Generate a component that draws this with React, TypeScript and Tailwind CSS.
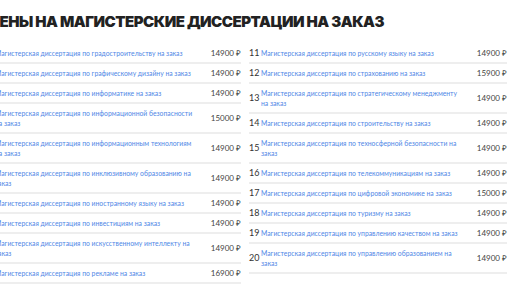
const left = [
  { n: 1, t: 'Магистерская диссертация по градостроительству на заказ', p: '14900 ₽' },
  { n: 2, t: 'Магистерская диссертация по графическому дизайну на заказ', p: '14900 ₽' },
  { n: 3, t: 'Магистерская диссертация по информатике на заказ', p: '14900 ₽' },
  { n: 4, t: 'Магистерская диссертация по информационной безопасности на заказ', p: '15000 ₽' },
  { n: 5, t: 'Магистерская диссертация по информационным технологиям на заказ', p: '14900 ₽' },
  { n: 6, t: 'Магистерская диссертация по инклюзивному образованию на заказ', p: '14900 ₽' },
  { n: 7, t: 'Магистерская диссертация по иностранному языку на заказ', p: '14900 ₽' },
  { n: 8, t: 'Магистерская диссертация по инвестициям на заказ', p: '14900 ₽' },
  { n: 9, t: 'Магистерская диссертация по искусственному интеллекту на заказ', p: '14900 ₽' },
  { n: 10, t: 'Магистерская диссертация по рекламе на заказ', p: '16900 ₽' },
];

const right = [
  { n: 11, t: 'Магистерская диссертация по русскому языку на заказ', p: '14900 ₽' },
  { n: 12, t: 'Магистерская диссертация по страхованию на заказ', p: '15900 ₽' },
  { n: 13, t: 'Магистерская диссертация по стратегическому менеджменту на заказ', p: '14900 ₽' },
  { n: 14, t: 'Магистерская диссертация по строительству на заказ', p: '14900 ₽' },
  { n: 15, t: 'Магистерская диссертация по техносферной безопасности на заказ', p: '14900 ₽' },
  { n: 16, t: 'Магистерская диссертация по телекоммуникациям на заказ', p: '14900 ₽' },
  { n: 17, t: 'Магистерская диссертация по цифровой экономике на заказ', p: '15000 ₽' },
  { n: 18, t: 'Магистерская диссертация по туризму на заказ', p: '14900 ₽' },
  { n: 19, t: 'Магистерская диссертация по управлению качеством на заказ', p: '14900 ₽' },
  { n: 20, t: 'Магистерская диссертация по управлению образованием на заказ', p: '14900 ₽' },
];

type Item = { n: number; t: string; p: string };

const PriceList = ({ items }: { items: Item[] }) => (
  <div className="w-[258px] shrink-0">
    {items.map((item) => (
      <div key={item.n} className="flex items-center py-[4px] border-b-2 border-[#eeeeee]">
        <span className="w-[12px] shrink-0 text-[9px] leading-[10px] text-[#333333]">{item.n}</span>
        <a href="#" className="w-[200px] shrink-0 text-[6.8px] leading-[10px] text-[#5087e6]">
          {item.t}
        </a>
        <span className="flex-1 text-right text-[8px] leading-[10px] text-[#444444]">{item.p}</span>
      </div>
    ))}
  </div>
);

export default function App() {
  return (
    <div className="w-[516px] h-[290px] overflow-hidden bg-white font-['Lato',sans-serif]">
      <div className="ml-[-17px] pt-[14px]">
        <h2 className="ml-[5px] text-[15px] leading-[16px] font-black tracking-[-0.5px] text-[#222222] font-['Inter',sans-serif]">
          ЦЕНЫ НА МАГИСТЕРСКИЕ ДИССЕРТАЦИИ НА ЗАКАЗ
        </h2>
        <div className="flex gap-[8px] mt-[14px]">
          <PriceList items={left} />
          <PriceList items={right} />
        </div>
      </div>
    </div>
  );
}
